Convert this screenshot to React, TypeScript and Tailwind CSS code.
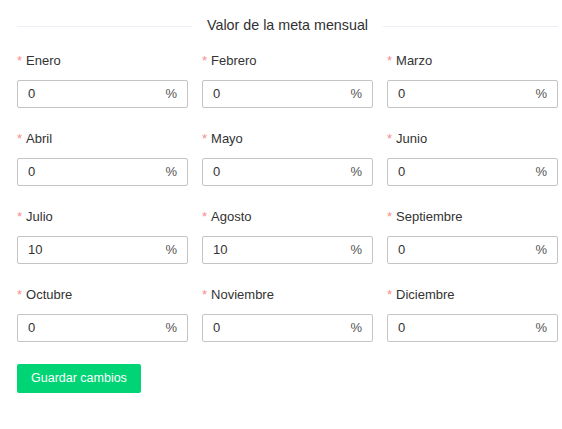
import React from "react";

const months: { name: string; value: string }[] = [
  { name: "Enero", value: "0" },
  { name: "Febrero", value: "0" },
  { name: "Marzo", value: "0" },
  { name: "Abril", value: "0" },
  { name: "Mayo", value: "0" },
  { name: "Junio", value: "0" },
  { name: "Julio", value: "10" },
  { name: "Agosto", value: "10" },
  { name: "Septiembre", value: "0" },
  { name: "Octubre", value: "0" },
  { name: "Noviembre", value: "0" },
  { name: "Diciembre", value: "0" },
];

function MonthField({ name, value }: { name: string; value: string }) {
  return (
    <div className="flex flex-col">
      <label className="h-[20px] flex items-center text-[13px] text-[#333]">
        <span className="text-[#f78e8e] mr-[4px]">*</span>
        {name}
      </label>
      <div className="mt-[9px] h-[28px] flex items-center border border-[#c4c4c4] rounded-[2px] pl-[10px] pr-[10px] text-[13px] text-[#333]">
        <input
          defaultValue={value}
          className="flex-1 min-w-0 outline-none bg-transparent"
        />
        <span className="text-[#555]">%</span>
      </div>
    </div>
  );
}

export default function App() {
  return (
    <div
      className="w-[562px] h-[429px] bg-white pl-[17px] pr-[4px] pt-[16px]"
      style={{ fontFamily: '"Liberation Sans", Arial, sans-serif' }}
    >
      <div className="flex items-center h-[20px]">
        <div className="flex-1 h-px bg-[#ebeef5]" />
        <h2 className="px-[15px] text-[14.3px] text-[#303133]">Valor de la meta mensual</h2>
        <div className="flex-1 h-px bg-[#ebeef5]" />
      </div>
      <div className="mt-[15px] grid grid-cols-3 gap-x-[14px] gap-y-[21px]">
        {months.map((m) => (
          <MonthField key={m.name} name={m.name} value={m.value} />
        ))}
      </div>
      <button className="mt-[22px] h-[29px] px-[14px] rounded-[2px] bg-[#00d474] text-white text-[12.5px]">
        Guardar cambios
      </button>
    </div>
  );
}
